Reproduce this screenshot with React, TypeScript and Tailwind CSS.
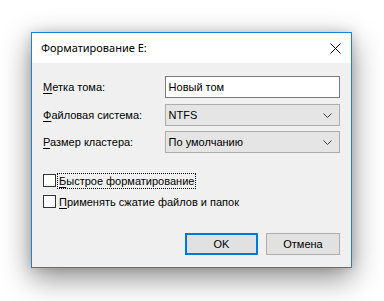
const sans = "font-['Liberation_Sans',Arial,sans-serif]";

function Label({ accel, rest }: { accel: string; rest: string }) {
  return (
    <span>
      <span className="underline underline-offset-2">{accel}</span>
      {rest}
    </span>
  );
}

function Chevron() {
  return (
    <svg width="9" height="5" viewBox="0 0 9 5" className="text-[#3c3c3c]">
      <polyline points="0.5,0.5 4.5,4.5 8.5,0.5" fill="none" stroke="currentColor" strokeWidth="1" />
    </svg>
  );
}

function Select({ value }: { value: string }) {
  return (
    <div className="flex h-[22px] w-[176px] items-center justify-between border border-[#adadad] bg-[#e5e5e5] pl-[3px] pr-[7px]">
      <span>{value}</span>
      <Chevron />
    </div>
  );
}

function Check({ accel, rest, focused }: { accel: string; rest: string; focused?: boolean }) {
  return (
    <div className="flex h-[17px] items-center">
      <div className="h-[13px] w-[13px] border border-[#333] bg-white" />
      <span
        className={
          "ml-[2px] px-[1px] leading-[14px] " +
          (focused ? "outline outline-1 outline-dotted outline-black" : "")
        }
      >
        <Label accel={accel} rest={rest} />
      </span>
    </div>
  );
}

export default function App() {
  return (
    <div className={`h-[301px] w-[384px] bg-white pl-[31px] pt-[32px] text-[11px] text-black ${sans}`}>
      <div className="flex h-[236px] w-[321px] flex-col border border-[#1883d7] bg-[#f0f0f0] shadow-[0_10px_28px_rgba(0,0,0,0.45),0_0_10px_rgba(0,0,0,0.14)]">
        <div className="flex h-[30px] items-center justify-between bg-white pl-[9px] pr-[10px]">
          <span className="font-['Noto_Sans',sans-serif] text-[11px]">Форматирование E:</span>
          <svg width="11" height="11" viewBox="0 0 11 11">
            <path d="M0.5 0.5 L10.5 10.5 M10.5 0.5 L0.5 10.5" stroke="black" strokeWidth="1" />
          </svg>
        </div>

        <div className="flex flex-1 flex-col px-[11px]">
          <div className="mt-[13px] flex h-[22px] items-center">
            <div className="w-[122px]">
              <Label accel="М" rest="етка тома:" />
            </div>
            <div className="flex h-[22px] w-[176px] items-center border border-[#7a7a7a] bg-white pl-[3px]">
              Новый том
            </div>
          </div>

          <div className="mt-[6px] flex h-[22px] items-center">
            <div className="w-[122px]">
              <Label accel="Ф" rest="айловая система:" />
            </div>
            <Select value="NTFS" />
          </div>

          <div className="mt-[5px] flex h-[22px] items-center">
            <div className="w-[122px]">
              <Label accel="Р" rest="азмер кластера:" />
            </div>
            <Select value="По умолчанию" />
          </div>

          <div className="mt-[19px] flex flex-col gap-[4px]">
            <Check accel="Б" rest="ыстрое форматирование" focused />
            <Check accel="П" rest="рименять сжатие файлов и папок" />
          </div>

          <div className="mt-auto mb-[12px] flex justify-end gap-[8px]">
            <button className="h-[22px] w-[73px] border-2 border-[#0078d7] bg-[#e1e1e1]">OK</button>
            <button className="h-[22px] w-[74px] border border-[#adadad] bg-[#e1e1e1]">Отмена</button>
          </div>
        </div>
      </div>
    </div>
  );
}
